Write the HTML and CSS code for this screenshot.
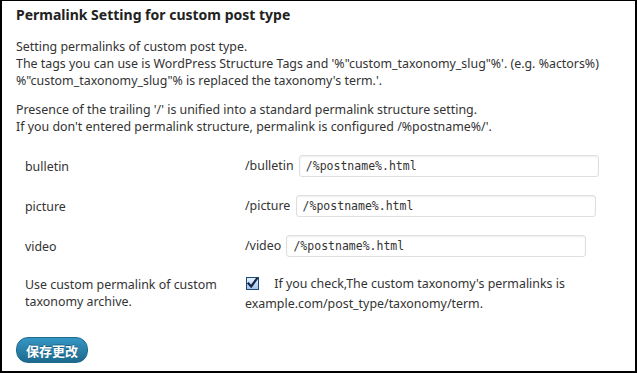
FILE: index.html
```html
<!DOCTYPE html>
<html>
<head>
    <title>Permalink Setting for custom post type</title>
    <link rel="stylesheet" href="styles.css">
</head>
<body>

    <div class="wrap">
        <h3 class="title">Permalink Setting for custom post type</h3>

        <p class="desc">
            Setting permalinks of custom post type.<br>
            The tags you can use is WordPress Structure Tags and '%"custom_taxonomy_slug"%'. (e.g. %actors%)<br>
            %"custom_taxonomy_slug"% is replaced the taxonomy's term.'.
        </p>
        <p class="desc">
            Presence of the trailing '/' is unified into a standard permalink structure setting.<br>
            If you don't entered permalink structure, permalink is configured /%postname%/'.
        </p>

        <div class="form-table">
            <div class="row field">
                <label class="th" for="bulletin">bulletin</label>
                <div class="td">/bulletin <input type="text" id="bulletin" class="code" value="/%postname%.html"></div>
            </div>
            <div class="row field">
                <label class="th" for="picture">picture</label>
                <div class="td">/picture <input type="text" id="picture" class="code" value="/%postname%.html"></div>
            </div>
            <div class="row field">
                <label class="th" for="video">video</label>
                <div class="td">/video <input type="text" id="video" class="code" value="/%postname%.html"></div>
            </div>
            <div class="row">
                <div class="th">Use custom permalink of custom taxonomy archive.</div>
                <div class="td wide">
                    <span class="check">
                        <svg width="13" height="13" viewBox="0 0 13 13">
                            <path d="M2.5 6.5 L5.2 9.5 L10.8 1.8" fill="none" stroke="#15254a" stroke-width="2.2" stroke-linecap="square"/>
                        </svg>
                    </span>
                    If you check,The custom taxonomy's permalinks is example.com/post_type/taxonomy/term.
                </div>
            </div>
        </div>

        <div class="submit">
            <button class="button-primary">保存更改</button>
        </div>
    </div>

</body>
</html>
```

FILE: styles.css
```css
html, body {
    margin: 0;
    padding: 0;
}

body {
    font-family: "Noto Sans", "Noto Sans CJK SC", sans-serif;
    font-size: 12.4px;
    color: #333;
    background-color: #fff;
}

.wrap {
    box-sizing: border-box;
    width: 637px;
    height: 373px;
    border-style: solid;
    border-color: #000;
    border-width: 1px 2px 2px 2px;
    padding: 0 14px;
}

.title {
    margin: 0;
    padding-top: 4px;
    font-size: 14px;
    font-weight: bold;
    line-height: 20px;
    color: #222;
}

.desc {
    margin: 13px 0 0;
    line-height: 17px;
}

.desc + .desc {
    margin-top: 12px;
}

.form-table {
    margin-top: 11px;
}

.row {
    display: flex;
    align-items: flex-start;
}

.row.field {
    height: 40px;
    align-items: center;
}

.th {
    width: 200px;
    padding: 10px 10px 10px 9px;
    line-height: 17px;
    flex-shrink: 0;
}

.row.field .th,
.row.field .td {
    padding-top: 0;
    padding-bottom: 0;
}

.td {
    padding: 8px 10px;
    line-height: 22px;
}

.td.wide {
    line-height: 20px;
    width: 360px;
}

input.code {
    box-sizing: border-box;
    width: 300px;
    height: 22px;
    margin: 0 0 0 2px;
    padding: 0 6px;
    border: 1px solid #dfdfdf;
    border-radius: 3px;
    box-shadow: inset 0 1px 2px rgba(0, 0, 0, 0.07);
    font-family: "DejaVu Sans Mono", monospace;
    font-size: 11.5px;
    color: #333;
    vertical-align: middle;
}

.check {
    display: inline-block;
    box-sizing: border-box;
    width: 13px;
    height: 13px;
    margin: 0 12px 0 1px;
    border: 1px solid #1f4a78;
    background: linear-gradient(#e4f0fc, #a4c6ea);
    vertical-align: -2px;
}

.check svg {
    display: block;
    margin: -1px 0 0 -1px;
}

.submit {
    margin-top: 15px;
}

.button-primary {
    width: 72px;
    height: 26px;
    padding: 0;
    border: 1px solid #1e6a8d;
    border-radius: 12px;
    background: linear-gradient(#3596c4, #1d6a8e);
    color: #fff;
    font-family: "Noto Sans CJK SC", sans-serif;
    font-size: 13px;
    font-weight: bold;
    text-shadow: 0 -1px 0 rgba(0, 0, 0, 0.3);
    cursor: pointer;
}
```
